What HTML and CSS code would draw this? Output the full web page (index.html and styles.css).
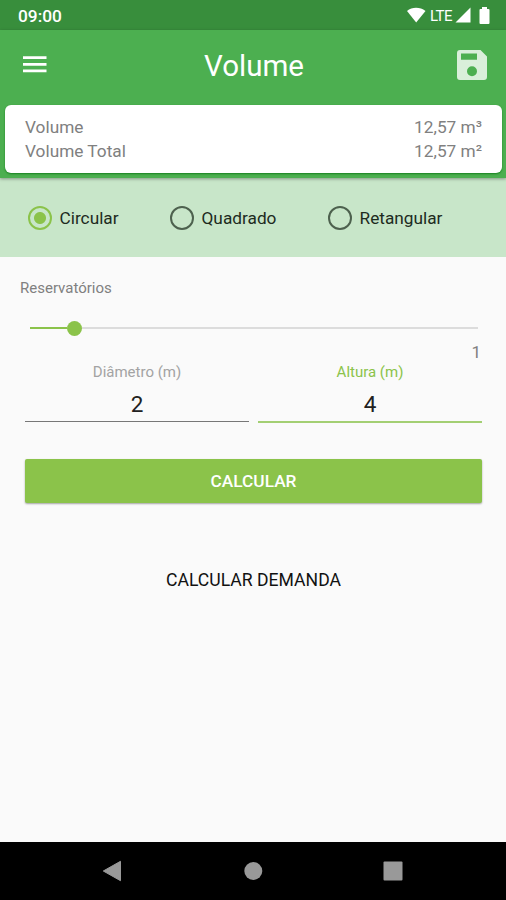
FILE: index.html
```html
<!doctype html>
<html lang="pt-BR">
  <head>
    <meta charset="UTF-8" />
    <meta name="viewport" content="width=device-width, initial-scale=1.0" />
    <title>Volume</title>
    <link rel="stylesheet" href="styles.css">
  </head>
  <body>
    <div class="status-bar">
      <span class="clock">09:00</span>
      <div class="status-icons">
        <svg width="20" height="16" viewBox="0 0 20 16">
          <path d="M1 4C6 -0.2 14 -0.2 19.5 4L10.2 15.5Z" fill="#fff" />
        </svg>
        <span class="network">LTE</span>
        <svg class="signal" width="16" height="16" viewBox="0 0 16 16">
          <path d="M15.5 0.5V15.5H0.5Z" fill="#fff" />
        </svg>
        <svg class="battery" width="11" height="17" viewBox="0 0 11 17">
          <path d="M3 0h5v2h1.5q1 0 1 1v13q0 1-1 1h-8q-1 0-1-1V3q0-1 1-1H3z" fill="#fff" />
        </svg>
      </div>
    </div>

    <header class="header">
      <div class="toolbar">
        <svg class="menu-icon" width="24" height="18" viewBox="0 0 24 18">
          <path d="M0 0.3h23.5v2.7H0zM0 7h23.5v2.7H0zM0 13.5h23.5v2.7H0z" fill="#fff" />
        </svg>
        <h1>Volume</h1>
        <svg class="save-icon" width="30" height="31" viewBox="0 0 30 31">
          <path
            fill="#d9efda"
            fill-rule="evenodd"
            d="M3 0H23.5L30 6.5V27Q30 30 27 30H3Q0 30 0 27V3Q0 0 3 0ZM4 3.5V9.8H20V3.5ZM15 16.3A5 5 0 1 0 15 26.3A5 5 0 1 0 15 16.3Z"
          />
        </svg>
      </div>
      <div class="result-card">
        <div class="result-row"><span>Volume</span><span>12,57 m³</span></div>
        <div class="result-row"><span>Volume Total</span><span>12,57 m²</span></div>
      </div>
    </header>

    <div class="shapes">
      <label><input type="radio" name="shape" checked />Circular</label>
      <label><input type="radio" name="shape" />Quadrado</label>
      <label><input type="radio" name="shape" />Retangular</label>
    </div>

    <main class="content">
      <p class="slider-label">Reservatórios</p>
      <div class="slider">
        <div class="slider-fill"></div>
        <div class="slider-thumb"></div>
        <div class="slider-track"></div>
      </div>
      <p class="slider-value">1</p>

      <div class="fields">
        <div class="field">
          <label for="diameter">Diâmetro (m)</label>
          <input type="text" id="diameter" value="2" />
        </div>
        <div class="field active">
          <label for="height">Altura (m)</label>
          <input type="text" id="height" value="4" />
        </div>
      </div>

      <button class="btn-primary" type="button">CALCULAR</button>
      <button class="btn-flat" type="button">CALCULAR DEMANDA</button>
    </main>

    <nav class="nav-bar">
      <svg width="20" height="22" viewBox="0 0 20 22">
        <path d="M18.5 1.3V20.7L1.3 11Z" fill="#999" stroke="#999" stroke-linejoin="round" />
      </svg>
      <svg width="20" height="20" viewBox="0 0 20 20">
        <circle cx="10.3" cy="10" r="9" fill="#999" />
      </svg>
      <svg width="20" height="20" viewBox="0 0 20 20">
        <rect x="0.5" y="0.5" width="19" height="19" rx="1" fill="#999" />
      </svg>
    </nav>
  </body>
</html>
```
FILE: styles.css
```css
* {
  box-sizing: border-box;
}

body {
  margin: 0;
  height: 100vh;
  display: flex;
  flex-direction: column;
  background-color: #fafafa;
  font-family: Roboto, "Liberation Sans", sans-serif;
  overflow: hidden;
}

svg {
  display: block;
}

.status-bar {
  height: 30px;
  padding: 0 16px 0 18px;
  display: flex;
  align-items: center;
  justify-content: space-between;
  background-color: #388e3c;
  color: #fff;
}

.clock {
  font-size: 17.3px;
  font-weight: 500;
  line-height: 30px;
  padding-top: 2px;
}

.status-icons {
  display: flex;
  align-items: center;
}

.network {
  margin-left: 4px;
  padding-top: 1px;
  font-size: 15px;
  letter-spacing: -0.5px;
}

.signal {
  margin-left: 3px;
}

.battery {
  margin-left: 8px;
}

.header {
  height: 148px;
  background-color: #4caf50;
  box-shadow: 0 1px 3px rgba(0, 0, 0, 0.35);
  position: relative;
}

.toolbar {
  height: 70px;
  padding: 0 19px 0 23px;
  display: flex;
  align-items: center;
  justify-content: space-between;
}

h1 {
  margin: 2px 0 0 4px;
  color: #fff;
  font-size: 29.5px;
  font-weight: 400;
}

.result-card {
  height: 68px;
  margin: 5px 4px 0 5px;
  padding: 10px 20px 0;
  background-color: #fff;
  border-radius: 6px;
  box-shadow: 0 1px 2px rgba(0, 110, 10, 0.7);
  color: #808080;
  font-size: 17.25px;
}

.result-row {
  display: flex;
  justify-content: space-between;
  line-height: 24px;
}

.shapes {
  height: 79px;
  padding-left: 28px;
  display: grid;
  grid-template-columns: 142px 158px auto;
  align-items: center;
  background-color: #c8e6c9;
  color: #1d2b1e;
  font-size: 17.25px;
}

.shapes label {
  display: flex;
  align-items: center;
}

.shapes input {
  appearance: none;
  width: 24px;
  height: 24px;
  margin: 0 7.5px 0 0;
  border: 2px solid #4d614e;
  border-radius: 50%;
}

.shapes input:checked {
  border-color: #8bc34a;
  background: radial-gradient(circle, #8bc34a 5.5px, transparent 6.5px);
}

.content {
  flex: 1;
  padding: 20px 24px 0 25px;
}

.slider-label {
  margin: 0 0 0 -5px;
  line-height: 22px;
  font-size: 15px;
  color: #808080;
}

.slider {
  height: 16px;
  margin: 21px 4px 0 5px;
  display: flex;
  align-items: center;
}

.slider-fill {
  width: 37px;
  height: 2px;
  background-color: #8bc34a;
}

.slider-thumb {
  width: 15px;
  height: 15px;
  border-radius: 50%;
  background-color: #8bc34a;
}

.slider-track {
  flex: 1;
  height: 2px;
  background-color: #dcdcdc;
}

.slider-value {
  margin: 6px 1px 0 0;
  line-height: 20px;
  text-align: right;
  font-size: 17px;
  color: #808080;
}

.fields {
  display: grid;
  grid-template-columns: 1fr 1fr;
  gap: 9px;
}

.field label {
  display: block;
  line-height: 20px;
  text-align: center;
  font-size: 15px;
  color: #a3a3a3;
}

.field input {
  display: block;
  width: 100%;
  height: 40px;
  padding: 5px 0 0;
  border: none;
  border-bottom: 1px solid #777;
  outline: none;
  background: transparent;
  text-align: center;
  font-family: inherit;
  font-size: 22.5px;
  color: #212121;
}

.field.active label {
  color: #8bc34a;
}

.field.active input {
  height: 41px;
  padding-bottom: 0;
  border-bottom: 2px solid #a3cf73;
}

.btn-primary,
.btn-flat {
  display: block;
  width: 100%;
  height: 44px;
  padding: 0;
  border: none;
  font-family: inherit;
  font-size: 17.3px;
  font-weight: 500;
}

.btn-primary {
  margin-top: 36px;
  background-color: #8bc34a;
  border-radius: 2px;
  box-shadow: 0 1px 2px rgba(0, 0, 0, 0.35);
  color: #fff;
}

.btn-flat {
  margin-top: 55px;
  background: none;
  color: #111;
  font-size: 17.6px;
  font-weight: 400;
}

.nav-bar {
  height: 58px;
  padding: 0 103px 0 102px;
  display: flex;
  align-items: center;
  justify-content: space-between;
  background-color: #000;
}
```
